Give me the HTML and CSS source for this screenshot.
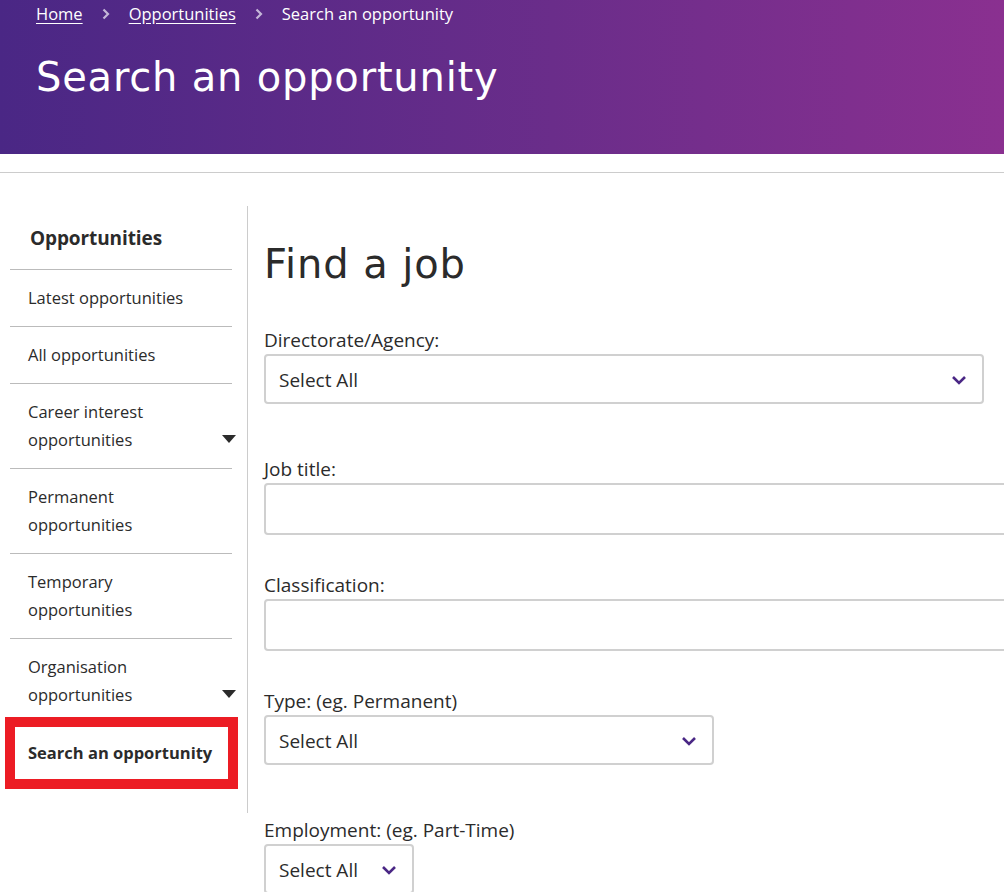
FILE: index.html
```html
<!DOCTYPE html>
<html lang="en">
<head>
    <meta charset="UTF-8">
    <meta name="viewport" content="width=device-width, initial-scale=1.0">
    <title>Search an opportunity</title>
    <link rel="stylesheet" href="styles.css">
</head>
<body>
    <header class="banner">
        <nav class="breadcrumb">
            <a href="#">Home</a>
            <svg class="sep" width="8" height="12" viewBox="0 0 8 12"><path d="M1.5 1.5 L6 6 L1.5 10.5" fill="none" stroke="#c4b6d8" stroke-width="2.2"/></svg>
            <a href="#">Opportunities</a>
            <svg class="sep" width="8" height="12" viewBox="0 0 8 12"><path d="M1.5 1.5 L6 6 L1.5 10.5" fill="none" stroke="#c4b6d8" stroke-width="2.2"/></svg>
            <span class="current">Search an opportunity</span>
        </nav>
        <h1>Search an opportunity</h1>
    </header>
    <div class="rule"></div>

    <div class="page">
        <aside class="sidebar">
            <div class="side-title">Opportunities</div>
            <ul class="side-nav">
                <li><a href="#">Latest opportunities</a></li>
                <li><a href="#">All opportunities</a></li>
                <li class="has-sub"><a href="#">Career interest<br>opportunities</a><span class="caret"></span></li>
                <li><a href="#">Permanent<br>opportunities</a></li>
                <li><a href="#">Temporary<br>opportunities</a></li>
                <li class="has-sub"><a href="#">Organisation<br>opportunities</a><span class="caret"></span></li>
                <li class="active"><a href="#">Search an opportunity</a></li>
            </ul>
        </aside>

        <main class="content">
            <h2>Find a job</h2>
            <form class="search-form">
                <div class="field">
                    <label>Directorate/Agency:</label>
                    <div class="select wide">
                        <span>Select All</span>
                        <svg width="16" height="10" viewBox="0 0 16 10"><path d="M2 2 L8 8 L14 2" fill="none" stroke="#4a2785" stroke-width="2.6"/></svg>
                    </div>
                </div>
                <div class="field text">
                    <label>Job title:</label>
                    <div class="text-input"></div>
                </div>
                <div class="field text">
                    <label>Classification:</label>
                    <div class="text-input"></div>
                </div>
                <div class="field">
                    <label>Type: (eg. Permanent)</label>
                    <div class="select medium">
                        <span>Select All</span>
                        <svg width="16" height="10" viewBox="0 0 16 10"><path d="M2 2 L8 8 L14 2" fill="none" stroke="#4a2785" stroke-width="2.6"/></svg>
                    </div>
                </div>
                <div class="field">
                    <label>Employment: (eg. Part-Time)</label>
                    <div class="select small">
                        <span>Select All</span>
                        <svg width="16" height="10" viewBox="0 0 16 10"><path d="M2 2 L8 8 L14 2" fill="none" stroke="#4a2785" stroke-width="2.6"/></svg>
                    </div>
                </div>
            </form>
        </main>
    </div>
</body>
</html>
```

FILE: styles.css
```css
* {
    margin: 0;
    padding: 0;
    box-sizing: border-box;
}

html, body {
    overflow: hidden;
}

body {
    font-family: 'Open Sans', 'Noto Sans', sans-serif;
    font-size: 16px;
    color: #2b2b2b;
    background: white;
    width: 1004px;
    height: 892px;
}

.banner {
    height: 154px;
    background: linear-gradient(90deg, #4a2785, #6a2d8a 55%, #8a3090);
    padding: 0 36px;
    color: white;
}

.breadcrumb {
    display: flex;
    align-items: center;
    height: 27px;
    font-size: 16.5px;
}

.breadcrumb a {
    color: white;
    text-decoration: underline;
    text-underline-offset: 3px;
}

.breadcrumb .sep {
    margin: 0 19px;
}

.banner h1 {
    font-family: 'DejaVu Sans', sans-serif;
    font-weight: 400;
    font-size: 40px;
    letter-spacing: 0.8px;
    margin-top: 23px;
    line-height: 54px;
}

.rule {
    height: 1px;
    background: #cccccc;
    margin-top: 18px;
}

.page {
    display: flex;
    padding-top: 33px;
}

.sidebar {
    width: 248px;
    flex-shrink: 0;
    border-right: 1px solid #cccccc;
    padding: 0 15px 23px 10px;
    height: 607px;
}

.side-title {
    font-weight: 700;
    font-size: 19px;
    padding: 19px 0 17px 20px;
    border-bottom: 1px solid #bbbbbb;
    line-height: 27px;
    letter-spacing: -0.1px;
}

.side-nav {
    list-style: none;
}

.side-nav li {
    position: relative;
    border-bottom: 1px solid #bbbbbb;
    padding: 14px 0 14px 18px;
    line-height: 28px;
}

.side-nav a {
    color: #2b2b2b;
    text-decoration: none;
    font-size: 16.5px;
}

.side-nav .caret {
    position: absolute;
    right: -4px;
    bottom: 25px;
    width: 0;
    height: 0;
    border-left: 7px solid transparent;
    border-right: 7px solid transparent;
    border-top: 8px solid #2b2b2b;
}

.side-nav li.active {
    border: 10px solid #ec1c24;
    margin: -7px -6px 0 -5px;
    padding: 12px 0 12px 13px;
}

.side-nav li.active a {
    font-weight: 700;
}

.content {
    padding-left: 16px;
    padding-top: 33px;
}

.content h2 {
    font-family: 'DejaVu Sans', sans-serif;
    font-weight: 400;
    font-size: 40px;
    letter-spacing: 0.9px;
    line-height: 50px;
    margin-bottom: 37px;
}

.field {
    margin-bottom: 51px;
}

.field.text {
    margin-bottom: 36px;
}

.field label {
    display: block;
    font-size: 19px;
    line-height: 28px;
}

.select, .text-input {
    border: 2px solid #d0d0d0;
    border-radius: 4px;
    display: flex;
    align-items: center;
    justify-content: space-between;
    padding: 2px 15px 0 13px;
    font-size: 19px;
}

.select {
    height: 50px;
}

.select.wide { width: 720px; }
.select.medium { width: 450px; }
.select.small { width: 150px; }

.text-input {
    height: 52px;
    width: 760px;
}
```
